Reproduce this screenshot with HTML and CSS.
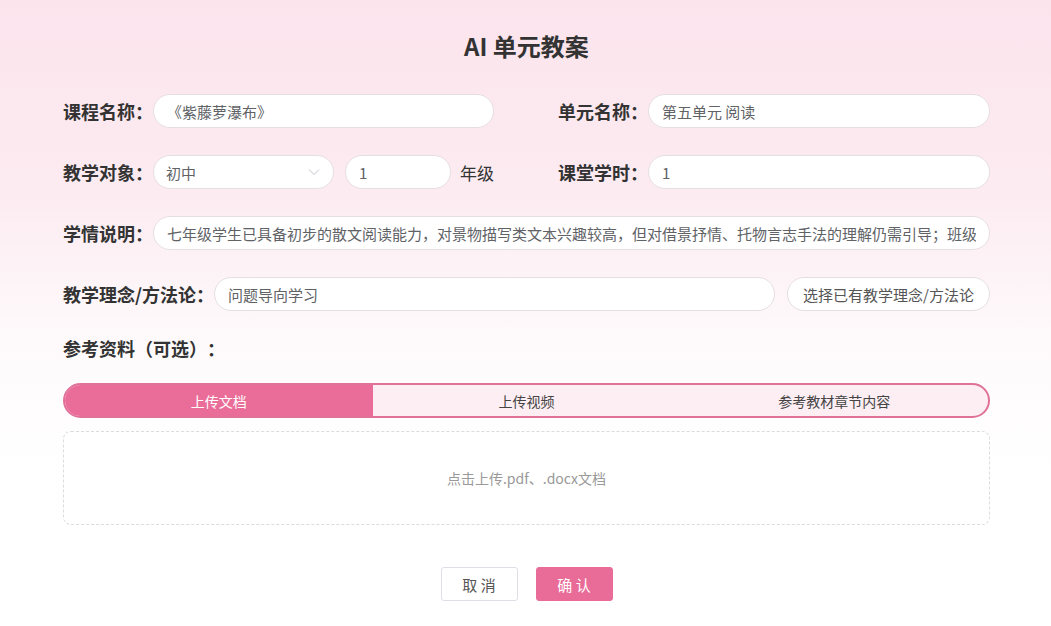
FILE: index.html
```html
<!DOCTYPE html>
<html lang="zh-CN">
<head>
  <meta charset="UTF-8" />
  <meta name="viewport" content="width=device-width, initial-scale=1.0"/>
  <title>AI 单元教案</title>
  <link rel="stylesheet" href="styles.css">
</head>
<body>
  <div class="plan-form">
    <h1 class="title">AI 单元教案</h1>

    <div class="grid-row">
      <div class="field">
        <label class="label">课程名称：</label>
        <input class="input" type="text" value="《紫藤萝瀑布》">
      </div>
      <div class="field">
        <label class="label">单元名称：</label>
        <input class="input" type="text" value="第五单元 阅读">
      </div>
    </div>

    <div class="grid-row">
      <div class="field">
        <label class="label">教学对象：</label>
        <div class="select">
          <span>初中</span>
          <svg class="chevron" width="12" height="8" viewBox="0 0 12 8">
            <path d="M1 1.5 L6 6.5 L11 1.5" fill="none" stroke="#c0c4cc" stroke-width="1"/>
          </svg>
        </div>
        <input class="input grade" type="text" value="1">
        <span class="unit">年级</span>
      </div>
      <div class="field">
        <label class="label">课堂学时：</label>
        <input class="input" type="text" value="1">
      </div>
    </div>

    <div class="field row">
      <label class="label">学情说明：</label>
      <input class="input" type="text" value="七年级学生已具备初步的散文阅读能力，对景物描写类文本兴趣较高，但对借景抒情、托物言志手法的理解仍需引导；班级整体学习氛围良好。">
    </div>

    <div class="field row">
      <label class="label">教学理念/方法论：</label>
      <input class="input" type="text" value="问题导向学习">
      <button class="pick-btn">选择已有教学理念/方法论</button>
    </div>

    <div class="section-label">参考资料（可选）：</div>

    <div class="tabs">
      <div class="tab active">上传文档</div>
      <div class="tab">上传视频</div>
      <div class="tab">参考教材章节内容</div>
    </div>

    <div class="upload">点击上传.pdf、.docx文档</div>

    <div class="actions">
      <button class="btn">取 消</button>
      <button class="btn primary">确 认</button>
    </div>
  </div>
</body>
</html>
```

FILE: styles.css
```css
* {
  box-sizing: border-box;
  margin: 0;
  padding: 0;
}
body {
  font-family: "Noto Sans CJK SC", "Noto Sans", sans-serif;
  background: linear-gradient(to bottom, #fce4ed 0%, #fcebf1 30%, #fefafb 55%, #ffffff 75%);
  color: #333;
  height: 100vh;
  padding-left: 2px;
  text-spacing-trim: space-all;
}
.plan-form {
  width: 927px;
  margin: 0 auto;
  padding-top: 30px;
}
.title {
  font-size: 24px;
  line-height: 32px;
  font-weight: 700;
  text-align: center;
  color: #333;
  margin-bottom: 32px;
}
.grid-row {
  display: grid;
  grid-template-columns: 431px 432px;
  column-gap: 64px;
  margin-bottom: 27px;
}
.field {
  display: flex;
  align-items: center;
  height: 34px;
}
.row {
  margin-bottom: 27px;
}
.label {
  font-size: 18px;
  font-weight: 700;
  color: #333;
  white-space: nowrap;
}
.input {
  flex: 1;
  min-width: 0;
  height: 34px;
  border: 1px solid #e6dfe2;
  border-radius: 17px;
  background: #fff;
  padding: 0 13px;
  font-family: inherit;
  font-size: 15px;
  color: #606266;
  outline: none;
}
.select {
  width: 181px;
  height: 34px;
  border: 1px solid #e6dfe2;
  border-radius: 17px;
  background: #fff;
  padding: 0 12px;
  display: flex;
  align-items: center;
  justify-content: space-between;
  font-size: 15px;
  color: #606266;
}
.chevron {
  margin-right: 1px;
}
.grade {
  flex: none;
  width: 106px;
  margin-left: 11px;
}
.unit {
  font-size: 17px;
  color: #333;
  margin-left: 9px;
}
.pick-btn {
  width: 203px;
  height: 34px;
  margin-left: 12px;
  border: 1px solid #e6dfe2;
  border-radius: 17px;
  background: #fff;
  font-family: inherit;
  font-size: 15px;
  color: #555;
  cursor: pointer;
}
.section-label {
  font-size: 18px;
  font-weight: 700;
  line-height: 26px;
  color: #333;
  margin-top: -3px;
  margin-bottom: 22px;
}
.tabs {
  display: grid;
  grid-template-columns: repeat(3, 1fr);
  height: 35px;
  border: 2px solid #e07199;
  border-radius: 18px;
  overflow: hidden;
  background: #fdeef3;
}
.tab {
  display: flex;
  align-items: center;
  justify-content: center;
  font-size: 14px;
  color: #444;
  cursor: pointer;
}
.tab.active {
  background: #ea6d99;
  color: #fff;
}
.upload {
  margin-top: 13px;
  height: 94px;
  border: 1px dashed #dcdcdc;
  border-radius: 8px;
  background: #fff;
  display: flex;
  align-items: center;
  justify-content: center;
  font-size: 14px;
  color: #999;
}
.actions {
  display: flex;
  justify-content: center;
  gap: 18px;
  margin-top: 42px;
}
.btn {
  width: 77px;
  height: 34px;
  border: 1px solid #dcdfe6;
  border-radius: 3px;
  background: #fff;
  font-family: inherit;
  font-size: 15px;
  color: #555;
  cursor: pointer;
}
.btn.primary {
  background: #e96b98;
  border-color: #e96b98;
  color: #fff;
}
```
